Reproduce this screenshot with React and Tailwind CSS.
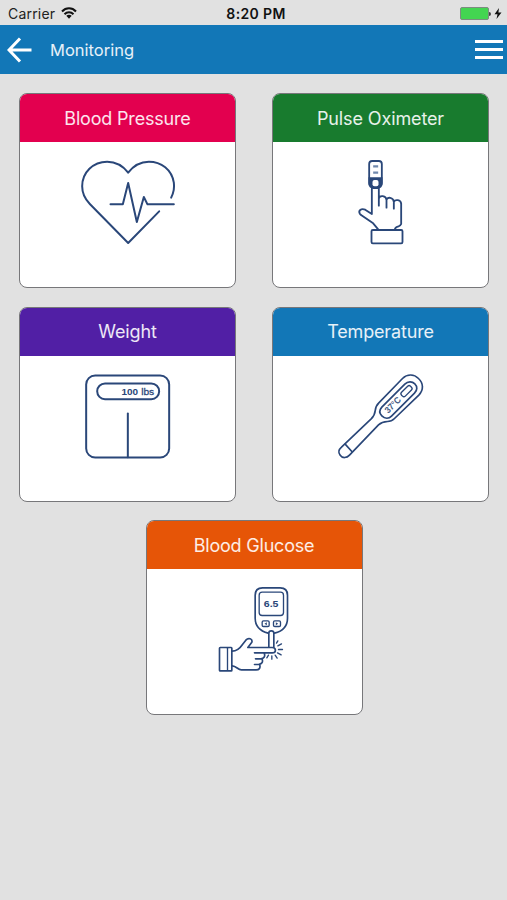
import React from 'react';

const line = {
  fill: 'none',
  stroke: '#2a4779',
  strokeLinecap: 'round',
  strokeLinejoin: 'round',
};

function HeartIcon() {
  return (
    <svg className="size-[100px]" viewBox="202.5 201 300 300" {...line} strokeWidth="6">
      <path d="M482 338 C490 322 492 306 490 293 C484 254 452 230 415 230 C388 230 368 243 353 263 C338 243 316 230 290 230 C248 230 215 262 215 304 C215 325 224 343 238 357 L353 474 L446 379" />
      <path d="M300 358 H337 L353 294 L379 411 L400 336 L411 358 H490" />
    </svg>
  );
}

function OximeterIcon() {
  return (
    <svg className="size-[100px]" viewBox="-28.5 6 300 300" {...line} strokeWidth="5.5">
      <rect x="86" y="33" width="38" height="76" rx="9" />
      <path d="M84 82 H126 V99 Q125 115 113 117 H97 Q85 115 84 99 Z" fill="#2a4779" stroke="none" />
      <rect x="96" y="90" width="18" height="19" rx="6" fill="#fff" stroke="none" />
      <path d="M98 49 H113 M98 68 H113" stroke="#7189ad" strokeWidth="7" strokeLinecap="butt" />
      <path d="M94 116 V192 L74 179 C61 174 53 183 58 191 Q60 194 65 197 L98 220 L113 238 M115 116 V167 M115 146 C117 135 137 136 138 150 V173 M138 150 C140 139 159 142 160 156 V176 M160 156 C164 147 181 149 182 161 V222 Q180 227 174 229 Q165 231 163 238" />
      <rect x="93" y="240" width="93" height="40" rx="4" />
    </svg>
  );
}

function ScaleIcon() {
  return (
    <svg className="size-[100px]" viewBox="7.5 1.5 300 300" {...line} strokeWidth="6">
      <rect x="32" y="30" width="249" height="246" rx="27" />
      <rect x="65" y="54" width="186" height="47" rx="23.5" />
      <path d="M157 144 V275" />
      <g fill="#2a4779" stroke="none" fontFamily="Liberation Sans, Arial, sans-serif" fontSize="29">
        <text x="138" y="87" fontWeight="700" textLength="50" lengthAdjust="spacingAndGlyphs">100</text>
        <text x="197" y="87" stroke="#2a4779" strokeWidth="0.8" textLength="39" lengthAdjust="spacingAndGlyphs">lbs</text>
      </g>
    </svg>
  );
}

function ThermometerIcon() {
  return (
    <svg className="size-[100px]" viewBox="16.5 1.5 300 300" {...line} strokeWidth="5">
      <path d="M48 245 L137 160 Q148 149 149 136 Q150 122 160 112 L231 39 C246 24 266 26 279 39 C294 53 295 73 280 89 L207 159 Q198 168 186 168 Q169 169 159 178 L72 269 C64 278 51 279 44 269 C37 261 40 252 48 245 Z" />
      <path d="M169 125 L238 56 C247 47 260 47 268 55 C276 63 276 74 267 83 L198 152 C190 160 178 160 169 151 C161 143 161 134 169 125 Z" />
      <path d="M59 236 L79 258" />
      <rect x="-19" y="-8" width="38" height="16" rx="6" transform="translate(243 77) rotate(-45)" strokeWidth="4" />
      <text
        transform="translate(188 145) rotate(-45)"
        fill="#3f587f"
        stroke="none"
        fontFamily="Liberation Sans, Arial, sans-serif"
        fontSize="27"
        fontWeight="700"
        textLength="57"
        lengthAdjust="spacingAndGlyphs"
      >
        37°C
      </text>
    </svg>
  );
}

function GlucoseIcon() {
  return (
    <svg className="size-[100px]" viewBox="-16.5 -1.5 300 300" {...line} strokeWidth="5">
      <path d="M176 161 C151 154 137 139 137 116 V47 Q137 25 159 25 H212 Q234 25 234 47 V116 C234 139 219 155 195 161" />
      <rect x="149" y="38" width="73" height="70" rx="9" strokeWidth="4" />
      <text x="163" y="82" fill="#2a4779" stroke="none" fontFamily="Liberation Sans, Arial, sans-serif" fontSize="29" fontWeight="700" textLength="44" lengthAdjust="spacingAndGlyphs">
        6.5
      </text>
      <rect x="158" y="124" width="21" height="17" rx="4" strokeWidth="4" />
      <rect x="192" y="124" width="21" height="17" rx="4" strokeWidth="4" />
      <path d="M172 128 V137 L165 132.500 Z M199 128 V137 L206 132.500 Z" fill="#2a4779" stroke="none" />
      <path d="M178 202 V161 C178 152 193 152 193 161 V203" />
      <rect x="30" y="204" width="37" height="70" rx="2" />
      <path d="M54 206 V272" strokeWidth="4" />
      <path d="M68 215 C83 215 91 207 99 195 L109 182 C117 173 130 178 127 188 L115 204 H188 C201 204 201 220 188 220 H135 M164 221 C168 230 164 237 154 238 H138 M158 239 C161 248 157 254 147 255 H135 M151 257 C153 266 149 271 140 271 H96 C84 271 82 260 68 259" />
      <path d="M201 191 L205 184 M205 199 L216 193 M207 210 H219 M204 220 L215 226 M197 227 L203 236 M187 229 V239 M177 227 L172 235" strokeWidth="4" />
    </svg>
  );
}

const cards = [
  { title: 'Blood Pressure', color: 'bg-[#e3004f]', spacing: 'tracking-[-0.18px]', Icon: HeartIcon },
  { title: 'Pulse Oximeter', color: 'bg-[#187b2e]', spacing: 'tracking-[-0.12px]', Icon: OximeterIcon },
  { title: 'Weight', color: 'bg-[#511fa5]', spacing: 'tracking-[-0.1px]', Icon: ScaleIcon },
  { title: 'Temperature', color: 'bg-[#1277b7]', spacing: 'tracking-[-0.15px]', Icon: ThermometerIcon },
  { title: 'Blood Glucose', color: 'bg-[#e65507]', spacing: 'tracking-[-0.2px]', Icon: GlucoseIcon },
];

function Card({ title, color, spacing, Icon }) {
  return (
    <button className="flex h-[195px] w-[217px] flex-col overflow-hidden rounded-[8px] border border-[#77777a] bg-white">
      <div className={`flex h-[48px] w-full shrink-0 items-center justify-center text-[18px] text-white/90 ${color} ${spacing}`}>
        {title}
      </div>
      <div className="flex w-full justify-center pt-[10px]">
        <Icon />
      </div>
    </button>
  );
}

function StatusBar() {
  return (
    <div className="grid h-[25px] grid-cols-3 items-center pt-[3px] text-[14px] leading-none text-[#222]">
      <div className="flex items-center gap-[6px] pl-[8px]">
        <span className="tracking-[0.2px]">Carrier</span>
        <svg className="-mt-[2px] h-[12px] w-[16px]" viewBox="0 0 16 12" fill="none" stroke="#111" strokeWidth="2">
          <path d="M1 4.500 C5 0.300 11 0.300 15 4.500 M3.500 7.200 C6 4.700 10 4.700 12.500 7.200" />
          <path d="M5.300 8.800 Q8 6.600 10.700 8.800 L8 11.700 Z" fill="#111" stroke="none" />
        </svg>
      </div>
      <div className="pl-[5px] text-center font-semibold tracking-[0.35px] text-[#111]">8:20 PM</div>
      <div className="-mt-px flex items-center justify-end pr-[5px]">
        <div className="h-[13px] w-[29px] rounded-[2px] border border-[#7d8c80] bg-[#43d551]" />
        <div className="h-[4px] w-[2px] rounded-r bg-[#444]" />
        <svg className="ml-[3px] h-[11px] w-[8px]" viewBox="0 0 8 11" fill="#111">
          <path d="M5 0 L0.500 6.200 H3.500 L2.500 11 L7.500 4.500 H4.400 Z" />
        </svg>
      </div>
    </div>
  );
}

export default function App() {
  return (
    <div className="min-h-screen bg-[#e1e1e1] font-['Inter',sans-serif]">
      <StatusBar />
      <header className="flex h-[49px] items-center bg-[#1277b7] pl-[7px] pr-[4px] text-white">
        <svg className="h-[26px] w-[26px]" viewBox="0 0 26 26" fill="none" stroke="currentColor" strokeWidth="3">
          <path d="M13 1.500 L2 13 L13 24.500 M2 13 H24.500" />
        </svg>
        <h1 className="ml-[17px] pt-[2px] text-[16.500px] text-white/90">Monitoring</h1>
        <div className="ml-auto flex w-[28px] flex-col gap-[5px]">
          <div className="h-[3px] bg-white" />
          <div className="h-[3px] bg-white" />
          <div className="h-[3px] bg-white" />
        </div>
      </header>
      <main className="flex flex-wrap justify-center gap-x-[36px] gap-y-[18.500px] pl-px pt-[19px]">
        {cards.map(card => (
          <Card key={card.title} {...card} />
        ))}
      </main>
    </div>
  );
}
